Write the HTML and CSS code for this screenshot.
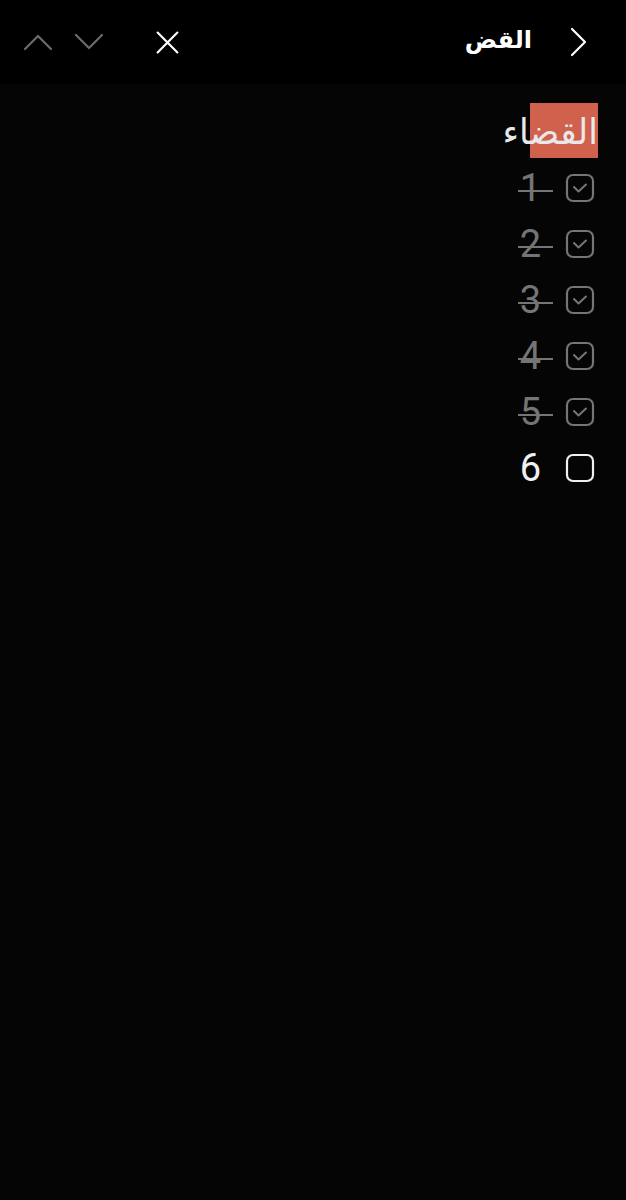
FILE: index.html
```html
<!DOCTYPE html>
<html lang="ar" dir="rtl">
<head>
    <meta charset="UTF-8">
    <meta name="viewport" content="width=device-width, initial-scale=1.0">
    <title>القضاء</title>
    <link rel="stylesheet" href="styles.css">
</head>
<body>
    <header class="search-bar">
        <div class="search-start">
            <button class="icon-btn back" aria-label="رجوع">
                <svg viewBox="0 0 30 30" width="30" height="30"><path d="M12 2 L25 15 L12 28" fill="none" stroke="#fff" stroke-width="2.2" stroke-linecap="round" stroke-linejoin="round"/></svg>
            </button>
            <span class="search-query">القض</span>
        </div>
        <div class="search-end">
            <button class="icon-btn close" aria-label="إغلاق">
                <svg viewBox="0 0 30 30" width="30" height="30"><path d="M4 4 L26 26 M26 4 L4 26" fill="none" stroke="#fff" stroke-width="2.4" stroke-linecap="round"/></svg>
            </button>
            <button class="icon-btn nav" aria-label="التالي">
                <svg viewBox="0 0 30 30" width="30" height="30"><path d="M2 8 L15 21 L28 8" fill="none" stroke="#6b6b6b" stroke-width="2.2" stroke-linecap="round" stroke-linejoin="round"/></svg>
            </button>
            <button class="icon-btn nav" aria-label="السابق">
                <svg viewBox="0 0 30 30" width="30" height="30"><path d="M2 22 L15 9 L28 22" fill="none" stroke="#6b6b6b" stroke-width="2.2" stroke-linecap="round" stroke-linejoin="round"/></svg>
            </button>
        </div>
    </header>

    <main class="note">
        <h1 class="note-title"><mark>القض</mark>اء</h1>

        <ul class="checklist">
            <li class="item done">
                <span class="box"><svg viewBox="0 0 30 30" width="30" height="30"><rect x="2" y="2" width="26" height="26" rx="6" fill="none" stroke="currentColor" stroke-width="2.2"/><path d="M9 14 L13.5 18.5 L21 11.5" fill="none" stroke="currentColor" stroke-width="2" stroke-linecap="round" stroke-linejoin="round"/></svg></span>
                <span class="num">1</span>
            </li>
            <li class="item done">
                <span class="box"><svg viewBox="0 0 30 30" width="30" height="30"><rect x="2" y="2" width="26" height="26" rx="6" fill="none" stroke="currentColor" stroke-width="2.2"/><path d="M9 14 L13.5 18.5 L21 11.5" fill="none" stroke="currentColor" stroke-width="2" stroke-linecap="round" stroke-linejoin="round"/></svg></span>
                <span class="num">2</span>
            </li>
            <li class="item done">
                <span class="box"><svg viewBox="0 0 30 30" width="30" height="30"><rect x="2" y="2" width="26" height="26" rx="6" fill="none" stroke="currentColor" stroke-width="2.2"/><path d="M9 14 L13.5 18.5 L21 11.5" fill="none" stroke="currentColor" stroke-width="2" stroke-linecap="round" stroke-linejoin="round"/></svg></span>
                <span class="num">3</span>
            </li>
            <li class="item done">
                <span class="box"><svg viewBox="0 0 30 30" width="30" height="30"><rect x="2" y="2" width="26" height="26" rx="6" fill="none" stroke="currentColor" stroke-width="2.2"/><path d="M9 14 L13.5 18.5 L21 11.5" fill="none" stroke="currentColor" stroke-width="2" stroke-linecap="round" stroke-linejoin="round"/></svg></span>
                <span class="num">4</span>
            </li>
            <li class="item done">
                <span class="box"><svg viewBox="0 0 30 30" width="30" height="30"><rect x="2" y="2" width="26" height="26" rx="6" fill="none" stroke="currentColor" stroke-width="2.2"/><path d="M9 14 L13.5 18.5 L21 11.5" fill="none" stroke="currentColor" stroke-width="2" stroke-linecap="round" stroke-linejoin="round"/></svg></span>
                <span class="num">5</span>
            </li>
            <li class="item">
                <span class="box"><svg viewBox="0 0 30 30" width="30" height="30"><rect x="2" y="2" width="26" height="26" rx="6" fill="none" stroke="currentColor" stroke-width="2.2"/></svg></span>
                <span class="num">6</span>
            </li>
        </ul>
    </main>
</body>
</html>
```

FILE: styles.css
```css
html, body {
    margin: 0;
    padding: 0;
    background-color: #050505;
    color: #fff;
    font-family: "DejaVu Sans", Roboto, sans-serif;
    min-height: 1200px;
}
.search-bar {
    display: flex;
    justify-content: space-between;
    align-items: center;
    height: 84px;
    background-color: #000;
    padding: 0 36px 0 23px;
}
.search-start {
    display: flex;
    align-items: center;
    gap: 28px;
}
.search-end {
    display: flex;
    align-items: center;
    gap: 21px;
}
.search-end .close {
    margin-left: 27px;
}
.icon-btn {
    display: flex;
    align-items: center;
    justify-content: center;
    background: none;
    border: none;
    padding: 0;
    width: 30px;
    height: 30px;
}
.close svg {
    width: 27px;
    height: 27px;
}
.search-query {
    font-size: 24px;
    font-weight: bold;
    line-height: 1;
    padding-bottom: 4px;
}
.note {
    padding: 20px 28px 0 0;
}
.note-title {
    margin: 0;
    font-size: 35px;
    font-weight: normal;
    line-height: 56px;
    color: #e8e8e8;
}
.note-title mark {
    background-color: #cf614d;
    color: #e8e8e8;
    padding: 9px 0 6px;
}
.checklist {
    list-style: none;
    margin: 0;
    padding: 0 3px 0 0;
}
.item {
    display: flex;
    align-items: center;
    height: 56px;
    gap: 12px;
}
.box {
    display: flex;
    color: #757575;
}
.num {
    font-family: Roboto, sans-serif;
    font-size: 38px;
    line-height: 1;
    color: #757575;
    padding-right: 12px;
    padding-left: 2px;
}
.done .num {
    background: linear-gradient(to bottom, transparent 56%, #757575 56%, #757575 61%, transparent 61%);
}
.item:not(.done) .box,
.item:not(.done) .num {
    color: #f0f0f0;
}
```
